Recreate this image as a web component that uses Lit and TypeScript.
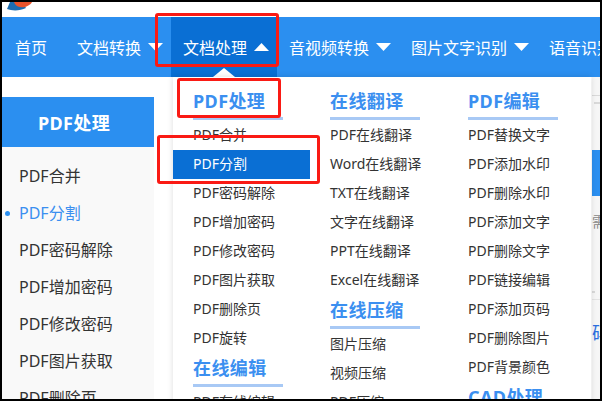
import { LitElement, html, css } from "lit";
import { customElement } from "lit/decorators.js";

const NAV = [
  { t: "首页", arrow: "", cls: "first" },
  { t: "文档转换", arrow: "down", cls: "" },
  { t: "文档处理", arrow: "up", cls: "active" },
  { t: "音视频转换", arrow: "down", cls: "" },
  { t: "图片文字识别", arrow: "down", cls: "" },
  { t: "语音识别", arrow: "down", cls: "" },
];
const SIDE = ["PDF合并", "PDF分割", "PDF密码解除", "PDF增加密码", "PDF修改密码", "PDF图片获取", "PDF删除页"];
type Group = { h: string; items: string[] };
const COLS: Group[][] = [
  [
    { h: "PDF处理", items: ["PDF合并", "PDF分割", "PDF密码解除", "PDF增加密码", "PDF修改密码", "PDF图片获取", "PDF删除页", "PDF旋转"] },
    { h: "在线编辑", items: ["PDF在线编辑"] },
  ],
  [
    { h: "在线翻译", items: ["PDF在线翻译", "Word在线翻译", "TXT在线翻译", "文字在线翻译", "PPT在线翻译", "Excel在线翻译"] },
    { h: "在线压缩", items: ["图片压缩", "视频压缩", "PDF压缩"] },
  ],
  [
    { h: "PDF编辑", items: ["PDF替换文字", "PDF添加水印", "PDF删除水印", "PDF添加文字", "PDF删除文字", "PDF链接编辑", "PDF添加页码", "PDF删除图片", "PDF背景颜色"] },
    { h: "CAD处理", items: [] },
  ],
];

@customElement("app-root")
export class AppRoot extends LitElement {
  static styles = css`
    :host { display: block; width: 602px; height: 401px; background: #000; font-family: "Noto Sans", "Noto Sans CJK SC", sans-serif; }
    .frame { position: absolute; left: 2px; top: 2px; width: 598px; height: 397px; overflow: hidden; background: #fff; display: flex; flex-direction: column; }
    .top { height: 15px; flex: none; }
    .top svg { display: block; margin-left: 4px; }
    .nav { height: 60px; flex: none; background: #2b8ff0; display: flex; align-items: stretch; color: #fff; font-size: 16px; white-space: nowrap; }
    .nav-item { flex: none; display: flex; align-items: center; gap: 7px; padding: 0 8px 0 12px; position: relative; }
    .nav-item.first { padding: 0 18px 0 13px; }
    .nav-item.active { background: #0a6fd4; }
    .nav-item.active::after { content: ""; position: absolute; left: 50%; bottom: 0; margin-left: -11px; border: 11px solid transparent; border-top: 0; border-bottom: 9px solid #fff; }
    .tri { width: 15px; height: 8px; flex: none; }
    .main { flex: 1; display: flex; padding-top: 20px; min-height: 0; }
    .side { width: 152px; flex: none; display: flex; flex-direction: column; }
    .side-h { height: 50px; flex: none; background: #2b8ff0; color: #fff; font-size: 18px; font-weight: 700; letter-spacing: 0.4px; display: flex; align-items: center; justify-content: center; padding-right: 8px; }
    .side-list { flex: 1; background: #f9f9f9; padding-top: 11px; color: #333; font-size: 16px; }
    .side-i { height: 37px; line-height: 37px; padding-left: 17px; position: relative; white-space: nowrap; }
    .side-i.on { color: #3b8ff0; }
    .side-i.on::before { content: ""; position: absolute; left: 3px; top: 16px; width: 5px; height: 5px; border-radius: 50%; background: #2b8ff0; }
    .rest { flex: 1; display: flex; justify-content: flex-end; }
    .strip { width: 8px; flex: none; margin-top: -20px; background: #f6f6f6; overflow: hidden; display: flex; flex-direction: column; position: relative; }
    .strip-line { height: 1px; background: #d9d9d9; margin-top: 18px; flex: none; }
    .strip-dash { height: 2px; background: #d9d9d9; margin: 6px 0 0 2px; flex: none; }
    .strip-blue { height: 46px; background: #2b8ff0; margin-top: 46px; flex: none; }
    .strip-t { font-size: 14px; line-height: 14px; white-space: nowrap; flex: none; }
    .strip-t.g { color: #888; margin-top: 19px; }
    .strip-dash2 { height: 2px; width: 3px; background: #d9d9d9; margin-top: 62px; flex: none; }
    .strip-line2 { height: 1px; background: #e4e4e4; margin-top: 6px; flex: none; }
    .strip-t.b { color: #2b6fe0; font-size: 18px; line-height: 18px; margin-top: 24px; }
    .drop { position: absolute; left: 171px; top: 75px; width: 418px; height: 340px; background: #fff; box-shadow: 0 0 6px rgba(0,0,0,.14); display: grid; grid-template-columns: 137px 138px 143px; padding-top: 9px; box-sizing: border-box; }
    .col { display: flex; flex-direction: column; min-width: 0; }
    .h { margin: 0 0 1px 20px; width: 90px; height: 34px; flex: none; box-sizing: border-box; border-bottom: 3px solid #a8c9f5; color: #3b8ff0; font-size: 18px; font-weight: 700; letter-spacing: 0.4px; line-height: 30px; white-space: nowrap; }
    .i { height: 29px; flex: none; line-height: 27px; padding-left: 20px; color: #333; font-size: 14px; white-space: nowrap; }
    .i.on { background: #0a6fd4; color: #fff; }
    .mark { position: absolute; border: 3px solid #fa1a14; border-radius: 3px; box-sizing: border-box; }
    .m1 { left: 153px; top: 11px; width: 124px; height: 54px; }
    .m2 { left: 175px; top: 76px; width: 104px; height: 40px; }
    .m3 { left: 155px; top: 133px; width: 163px; height: 49px; }
  `;

  private tri(dir: string) {
    if (!dir) return "";
    const pts = dir === "up" ? "7.5,0 15,8 0,8" : "0,0 15,0 7.5,8";
    return html`<svg class="tri" viewBox="0 0 15 8"><polygon points=${pts} fill="#fff"></polygon></svg>`;
  }

  render() {
    return html`
      <div class="frame">
        <div class="top">
          <svg width="30" height="10" viewBox="0 0 30 10">
            <path d="M1 7 C6 9 14 9 20 6 L16 0 L4 0 Z" fill="#1a6cb0"></path>
            <path d="M8 0 L26 0 C24 4 18 6 14 5 C11 4.500 9 3 8 0 Z" fill="#e8532b"></path>
          </svg>
        </div>
        <nav class="nav">
          ${NAV.map((n) => html`<div class="nav-item ${n.cls}"><span>${n.t}</span>${this.tri(n.arrow)}</div>`)}
        </nav>
        <div class="main">
          <aside class="side">
            <div class="side-h">PDF处理</div>
            <div class="side-list">
              ${SIDE.map((s, i) => html`<div class="side-i ${i === 1 ? "on" : ""}">${s}</div>`)}
            </div>
          </aside>
          <div class="rest">
            <div class="strip">
              <div class="strip-line"></div>
              <div class="strip-dash"></div>
              <div class="strip-blue"></div>
              <div class="strip-t g">需要</div>
              <div class="strip-dash2"></div>
              <div class="strip-line2"></div>
              <div class="strip-t b">码</div>
            </div>
          </div>
        </div>
        <div class="drop">
          ${COLS.map((c) => html`<div class="col">
            ${c.map((g) => html`<div class="h">${g.h}</div>
              ${g.items.map((it) => html`<div class="i ${it === "PDF分割" ? "on" : ""}">${it}</div>`)}`)}
          </div>`)}
        </div>
        <div class="mark m1"></div>
        <div class="mark m2"></div>
        <div class="mark m3"></div>
      </div>
    `;
  }
}
